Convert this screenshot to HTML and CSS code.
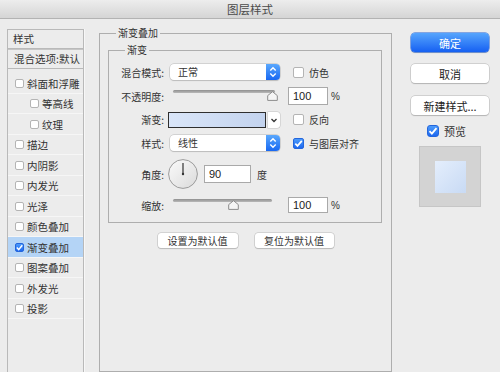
FILE: index.html
```html
<!DOCTYPE html>
<html>
<head>
<meta charset="utf-8">
<title>图层样式</title>
<link rel="stylesheet" href="styles.css">
</head>
<body>
<div class="titlebar">图层样式</div>
<div class="dialog">

<div class="sidebar">
<div class="side-head">样式</div>
<div class="side-blend">混合选项:默认</div>
<ul class="fx-list">
<li><span class="cb"></span>斜面和浮雕</li>
<li class="sub"><span class="cb"></span>等高线</li>
<li class="sub"><span class="cb"></span>纹理</li>
<li><span class="cb"></span>描边</li>
<li><span class="cb"></span>内阴影</li>
<li><span class="cb"></span>内发光</li>
<li><span class="cb"></span>光泽</li>
<li><span class="cb"></span>颜色叠加</li>
<li class="active"><span class="cb on"><svg width="9" height="9" viewBox="0 0 9 9"><polyline points="1.8,4.6 3.7,6.6 7.3,2.2" fill="none" stroke="#fff" stroke-width="1.5"/></svg></span>渐变叠加</li>
<li><span class="cb"></span>图案叠加</li>
<li><span class="cb"></span>外发光</li>
<li><span class="cb"></span>投影</li>
</ul>
</div>

<div class="main">
<fieldset class="group outer">
<legend>渐变叠加</legend>
<fieldset class="group inner">
<legend>渐变</legend>

<div class="row">
<span class="lbl">混合模式:</span>
<div class="select"><span>正常</span><i class="arrows"><svg width="14" height="16" viewBox="0 0 14 16"><polyline points="4.3,6.5 7,3.8 9.7,6.5" fill="none" stroke="#fff" stroke-width="1.4"/><polyline points="4.3,9.5 7,12.2 9.7,9.5" fill="none" stroke="#fff" stroke-width="1.4"/></svg></i></div>
<label class="check"><span class="cb"></span>仿色</label>
</div>

<div class="row">
<span class="lbl">不透明度:</span>
<div class="slider op"><div class="track"></div><svg class="thumb" style="left: 94px" width="11" height="10" viewBox="0 0 11 10"><path d="M5.5 0.7 L10.3 4.6 V9.4 H0.7 V4.6 Z" fill="#f5f5f5" stroke="#8c8c8c"/></svg></div>
<div class="num">100</div><span class="unit">%</span>
</div>

<div class="row r3">
<span class="lbl">渐变:</span>
<div class="swatch"></div>
<div class="drop"><svg width="12" height="16" viewBox="0 0 12 16"><polyline points="3.5,7 6,9.5 8.5,7" fill="none" stroke="#333" stroke-width="1.3"/></svg></div>
<label class="check"><span class="cb"></span>反向</label>
</div>

<div class="row">
<span class="lbl">样式:</span>
<div class="select"><span>线性</span><i class="arrows"><svg width="14" height="16" viewBox="0 0 14 16"><polyline points="4.3,6.5 7,3.8 9.7,6.5" fill="none" stroke="#fff" stroke-width="1.4"/><polyline points="4.3,9.5 7,12.2 9.7,9.5" fill="none" stroke="#fff" stroke-width="1.4"/></svg></i></div>
<label class="check"><span class="cb on"><svg width="11" height="11" viewBox="0 0 11 11"><polyline points="2.3,5.6 4.5,7.9 8.8,2.9" fill="none" stroke="#fff" stroke-width="1.7"/></svg></span>与图层对齐</label>
</div>

<div class="row angle">
<span class="lbl">角度:</span>
<svg class="dial" width="30" height="30" viewBox="0 0 30 30">
<defs><linearGradient id="dg" x1="0" y1="0" x2="1" y2="1"><stop offset="0" stop-color="#fbfbfb"/><stop offset="1" stop-color="#dadada"/></linearGradient></defs>
<circle cx="15" cy="15" r="14.4" fill="url(#dg)" stroke="#9b9b9b"/>
<line x1="15" y1="15" x2="15" y2="4" stroke="#333" stroke-width="1.2"/>
<circle cx="15" cy="15" r="1.2" fill="#333"/>
</svg>
<div class="num deg">90</div><span class="unit wide">度</span>
</div>

<div class="row scale">
<span class="lbl">缩放:</span>
<div class="slider sc"><div class="track"></div><svg class="thumb" style="left: 55px" width="11" height="10" viewBox="0 0 11 10"><path d="M5.5 0.7 L10.3 4.6 V9.4 H0.7 V4.6 Z" fill="#f5f5f5" stroke="#8c8c8c"/></svg></div>
<div class="num small">100</div><span class="unit">%</span>
</div>

</fieldset>
<div class="defaults">
<button class="pill w80">设置为默认值</button>
<button class="pill w79">复位为默认值</button>
</div>
</fieldset>
</div>

<div class="actions">
<button class="btn primary">确定</button>
<button class="btn">取消</button>
<button class="btn">新建样式...</button>
<label class="preview-check"><span class="cb on big"><svg width="12" height="12" viewBox="0 0 12 12"><polyline points="2.5,6.1 4.9,8.6 9.5,3.2" fill="none" stroke="#fff" stroke-width="1.8"/></svg></span>预览</label>
<div class="preview"><div class="preview-swatch"></div></div>
</div>

</div>
</body>
</html>
```

FILE: styles.css
```css
/* Layer style dialog
*/

body
{ margin: 0;
width: 500px;
height: 372px;
overflow: hidden;
background: #ececec;
font-family: "Noto Sans CJK SC", "Noto Sans", sans-serif;
font-size: 10px;
color: #333;
}

.titlebar
{ height: 18px;
line-height: 18px;
text-align: center;
font-size: 11.5px;
color: #4a4a4a;
background: linear-gradient(#ededed, #d5d5d5);
border-bottom: 1px solid #b3b3b3;
}

.dialog
{ display: flex;
align-items: flex-start;
height: 353px;
overflow: hidden;
}

/* Sidebar */

.sidebar
{ margin: 10px 0 0 7px;
width: 75px;
height: 343px;
border-left: 1px solid #b9b9b9;
border-right: 1px solid #b9b9b9;
box-shadow: 1px 0 0 #f7f7f7;
}

.side-head
{ height: 18px;
line-height: 18px;
padding-left: 5px;
border-top: 1px solid #b9b9b9;
border-bottom: 1px solid #b9b9b9;
font-size: 10.5px;
}

.side-blend
{ height: 18px;
line-height: 18px;
padding-left: 6px;
border-top: 1px solid #c6c6c6;
border-bottom: 1px solid #b9b9b9;
font-size: 10.5px;
white-space: nowrap;
overflow: hidden;
}

.fx-list
{ list-style: none;
margin: 4px 0 0;
padding: 0;
}

.fx-list li
{ display: flex;
align-items: center;
height: 20px;
box-sizing: border-box;
padding-left: 7px;
border-bottom: 1px solid #f6f6f6;
font-size: 10.5px;
}

.fx-list li:nth-child(odd)
{ height: 21px;
}

.fx-list li.sub
{ padding-left: 22px;
}

.fx-list li.active
{ background: #b4d4f6;
}

.fx-list .cb
{ width: 9px;
height: 9px;
margin-right: 3px;
}

/* Checkboxes */

.cb
{ display: inline-flex;
flex: none;
box-sizing: border-box;
width: 11px;
height: 11px;
background: #fff;
border: 1px solid #b4b4b4;
border-radius: 2px;
}

.cb.on
{ background: linear-gradient(#4c9bfb, #1d68f0);
border-color: #2466dc;
}

.cb svg
{ margin: -1px;
}

.cb.big
{ width: 12px;
height: 12px;
border-radius: 3px;
}

/* Main panel */

.main
{ margin: 7px 0 0 15px;
width: 293px;
}

fieldset.group
{ margin: 0;
min-width: 0;
border: 1px solid #aeaeae;
}

fieldset.group legend
{ padding: 0 2px;
line-height: 14px;
font-size: 10px;
}

.outer
{ box-sizing: border-box;
height: 346px;
padding: 3px 8px 0;
border-bottom: none;
}

.outer > legend
{ margin-left: 8px;
}

.inner
{ width: 272px;
padding: 3px 0 5px;
}

.inner > legend
{ margin-left: 16px;
}

.row
{ display: flex;
align-items: center;
height: 24px;
}

.row.r3
{ height: 23px;
}

.row.angle
{ height: 38px;
}

.lbl
{ flex: none;
width: 55px;
text-align: right;
white-space: nowrap;
}

.select
{ display: flex;
margin-left: 6px;
width: 110px;
height: 16px;
background: #fff;
border-radius: 4px;
box-shadow: 0 0 0 0.5px #b8b8b8, 0 1px 1px rgba(0, 0, 0, 0.18);
}

.select span
{ flex: 1;
padding-left: 8px;
line-height: 16px;
}

.arrows
{ display: flex;
width: 14px;
background: linear-gradient(#5aa8fd, #1868f2);
border-radius: 0 4px 4px 0;
}

.check
{ display: flex;
align-items: center;
margin-left: 13px;
}

.check .cb
{ margin-right: 5px;
}

.slider
{ position: relative;
height: 18px;
margin-left: 9px;
}

.slider.op
{ width: 102px;
}

.slider.sc
{ width: 99px;
}

.track
{ margin-top: 3px;
height: 3px;
border-radius: 2px;
background: linear-gradient(#8f8f8f, #b9b9b9);
}

.thumb
{ position: absolute;
top: 4px;
}

.num
{ box-sizing: border-box;
width: 40px;
height: 18px;
margin-left: 13px;
padding-left: 4px;
line-height: 16px;
background: #fff;
border: 1px solid #a9a9a9;
font-family: "Liberation Sans", sans-serif;
font-size: 11px;
color: #222;
}

.num.small
{ height: 16px;
line-height: 14px;
margin-left: 16px;
}

.num.deg
{ width: 47px;
margin-left: 6px;
}

.unit
{ margin-left: 3px;
font-family: "Liberation Sans", sans-serif;
}

.unit.wide
{ margin-left: 6px;
font-family: "Noto Sans CJK SC", sans-serif;
}

.swatch
{ box-sizing: border-box;
margin-left: 4px;
width: 98px;
height: 16px;
border: 1px solid #2f2f2f;
background: linear-gradient(90deg, #dae6f9, #c3d3ee);
}

.drop
{ display: flex;
margin-left: 2px;
width: 12px;
height: 16px;
background: #fff;
border-radius: 0 3px 3px 0;
box-shadow: 0 0 0 0.5px #c0c0c0;
}

.dial
{ margin-left: 4px;
}

.defaults
{ display: flex;
justify-content: center;
gap: 17px;
margin-top: 10px;
}

.pill
{ height: 15px;
padding: 0;
font-family: inherit;
font-size: 10px;
line-height: 14px;
color: #333;
background: #fff;
border: none;
border-radius: 3px;
box-shadow: 0 0 0 0.5px #b9b9b9, 0 1px 1px rgba(0, 0, 0, 0.2);
}

.w80
{ width: 80px;
}

.w79
{ width: 79px;
}

/* Right column */

.actions
{ display: flex;
flex-direction: column;
margin: 14px 0 0 19px;
width: 78px;
}

.btn
{ height: 19px;
padding: 0;
margin-top: 12px;
font-family: inherit;
font-size: 11px;
line-height: 18px;
color: #222;
background: #fff;
border: none;
border-radius: 4px;
box-shadow: 0 0 0 0.5px #b4b4b4, 0 1px 1px rgba(0, 0, 0, 0.22);
}

.btn:nth-child(3)
{ margin-top: 13px;
}

.btn.primary
{ margin-top: 0;
color: #fff;
background: linear-gradient(#56a5fd, #1660f2);
box-shadow: 0 0 0 0.5px #1d5ed6, 0 1px 1px rgba(0, 0, 0, 0.2);
}

.preview-check
{ display: flex;
align-items: center;
margin: 10px 0 0 16px;
font-size: 11px;
line-height: 12px;
}

.preview-check .cb
{ margin-right: 5px;
}

.preview
{ display: flex;
align-items: center;
justify-content: center;
box-sizing: border-box;
margin: 9px 0 0 8px;
width: 62px;
height: 61px;
background: #d3d3d3;
border: 1px solid #c6c6c6;
}

.preview-swatch
{ width: 31px;
height: 32px;
background: linear-gradient(135deg, #e4eefc, #c8daf4);
}
```
